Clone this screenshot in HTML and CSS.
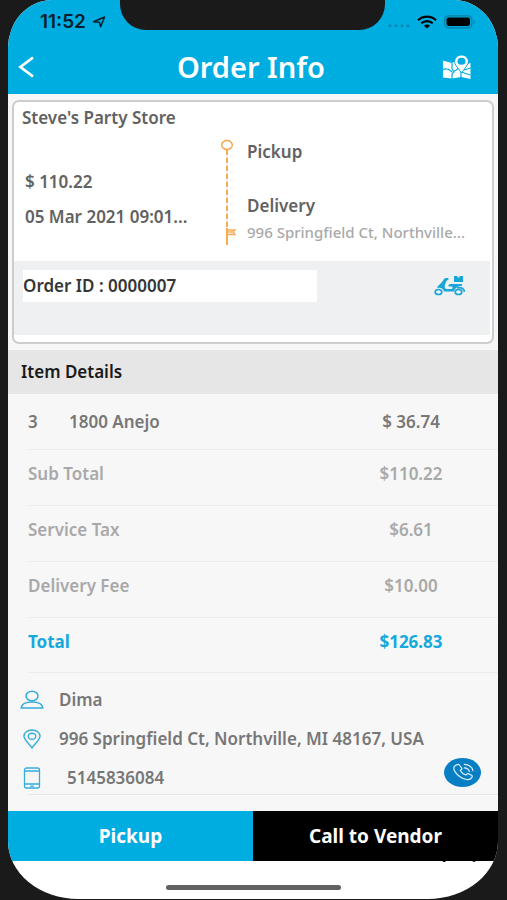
FILE: index.html
```html
<!DOCTYPE html>
<html lang="en">
<head>
<meta charset="utf-8">
<meta name="viewport" content="width=device-width, initial-scale=1">
<title>Order Info</title>
<link rel="stylesheet" href="styles.css">
</head>
<body>
<div class="screen">
  <div class="notch"></div>
  <header class="top">
    <div class="status">
      <span class="clock">11:52
        <svg width="14" height="12" viewBox="0 0 14 12" aria-hidden="true"><path d="M1.5 5.7 12.6 1 8.6 10.8 7.4 6.2Z" fill="none" stroke="#06202b" stroke-width="1.5" stroke-linejoin="round"/></svg>
      </span>
      <span class="signals">
        <svg width="22" height="4" viewBox="0 0 22 4" aria-hidden="true"><g fill="#0880a8"><circle cx="2" cy="3" r="1.4"/><circle cx="8" cy="3" r="1.4"/><circle cx="14" cy="3" r="1.4"/><circle cx="20" cy="3" r="1.4"/></g></svg>
        <svg width="20" height="14" viewBox="0 0 20 14" aria-hidden="true"><g fill="none" stroke="#000" stroke-width="2.2"><path d="M1 5.2C6 .5 14 .5 19 5.2"/><path d="M4.3 8.3c3.3-3 8.1-3 11.4 0"/></g><path d="M10 13.4 6.9 10.7c1.7-1.5 4.5-1.5 6.2 0Z"/></svg>
        <svg width="32" height="14" viewBox="0 0 32 14" aria-hidden="true"><rect x=".8" y=".8" width="27" height="12" rx="3.5" fill="none" stroke="#087fa6" stroke-width="1.3"/><rect x="2.5" y="2.5" width="23.5" height="8.6" rx="2"/><path d="M29.6 5c1.6.5 1.6 3.500 0 4Z" fill="#087fa6"/></svg>
      </span>
    </div>
    <div class="titlebar">
      <button class="icon-button" type="button" aria-label="Back"><svg width="18" height="24" viewBox="0 0 18 24"><path d="M15 2.500 2.500 12 15 21.500" fill="none" stroke="#fff" stroke-width="2.800"/></svg></button>
      <h1>Order Info</h1>
      <button class="icon-button" type="button" aria-label="Map"><svg width="30" height="26" viewBox="0 0 30 26">
        <path d="M1 6.500 9.500 9 15 7l5 5 8.500-3V25L19.500 23 10 24.500 1 23.500Z" fill="#fff"/>
        <g fill="none" stroke="#00ade0" stroke-width="1.200"><path d="M1 15.500c4-1.500 6-.5 9 2.500M10 8.500V15l2 3-2 2v5M12 17c2.500 0 3-2 5-3M19 18v6M19 18l9.500 3M22 16l6.500-2"/></g>
        <path d="M19.500 19 14 11.500C10.500 6.500 14 1 19.500 1S28.500 6.500 25 11.500Z" fill="#fff" stroke="#00ade0" stroke-width="1"/><ellipse cx="19.500" cy="7.300" rx="4" ry="3.500" fill="#00ade0"/>
      </svg></button>
    </div>
  </header>

  <main>
    <section class="card">
      <h2>Steve's Party Store</h2>
      <div class="summary">
        <div class="amounts">
          <p>$ 110.22</p>
          <p>05 Mar 2021 09:01...</p>
        </div>
        <svg class="route" width="18" height="108" viewBox="0 0 18 108" aria-hidden="true"><g fill="none" stroke="#f7ac54"><ellipse cx="8" cy="8" rx="5.300" ry="4.500" stroke-width="1.500"/><path d="M8 12.500V91" stroke-width="2" stroke-dasharray="5.500 2.500"/><path d="M8 91v17" stroke-width="2"/><path d="M8 93h8l-2 2 2 2.500H8M9 95h5" stroke-width="1.300"/></g></svg>
        <div class="stops">
          <h3>Pickup</h3>
          <h3>Delivery</h3>
          <p>996 Springfield Ct, Northville...</p>
        </div>
      </div>
      <div class="order">
        <strong>Order ID : 0000007</strong>
        <svg width="32" height="20" viewBox="0 0 32 20" aria-hidden="true"><g fill="#18a5d8"><path d="M10 3c1-1 3-1 4.500-.8V3.500C12.500 4 12 6 11 8.500c-.8 3 0 4.500 2 4.500h4.500c1 0 1.500-1.500.5-2.500h-3C13.500 9.500 15 8 17 8h11v1.800c-4.500.2-7 2.500-8 5.700H10C9.500 12.500 6 11 3 12.200 3.800 9 7.500 8 10 3Z"/><path d="M20 0h3.500v1.500h2V0H29v6h-9Z"/></g><g fill="none" stroke="#18a5d8" stroke-width="1.700"><ellipse cx="4.500" cy="16" rx="3.300" ry="2.500"/><ellipse cx="24.500" cy="16" rx="3.300" ry="2.500"/><path d="M23 11.800c4-.5 7 1 7.500 4"/></g></svg>
      </div>
    </section>

    <h2 class="section-title">Item Details</h2>
    <table>
      <tbody>
        <tr class="item"><td class="qty">3</td><td>1800 Anejo</td><td class="price">$ 36.74</td></tr>
        <tr><th colspan="2" scope="row">Sub Total</th><td class="price">$110.22</td></tr>
        <tr><th colspan="2" scope="row">Service Tax</th><td class="price">$6.61</td></tr>
        <tr><th colspan="2" scope="row">Delivery Fee</th><td class="price">$10.00</td></tr>
        <tr class="total"><th colspan="2" scope="row">Total</th><td class="price">$126.83</td></tr>
      </tbody>
    </table>

    <section class="contact">
      <p><svg width="24" height="20" viewBox="0 0 24 20" aria-hidden="true"><g fill="none" stroke="#35addb" stroke-width="1.500"><ellipse cx="12" cy="6" rx="6" ry="4.700"/><path d="M1.200 18C1.500 14 5 12 12 12s10.500 2 10.800 6Z"/></g></svg><span>Dima</span></p>
      <p><svg width="24" height="20" viewBox="0 0 24 20" aria-hidden="true"><g fill="none" stroke="#35addb" stroke-width="1.400"><path d="M12 19C10 15.500 4 11 4 7.300 4 3.500 7.500 1 12 1s8 2.500 8 6.300C20 11 14 15.500 12 19Z"/><ellipse cx="12" cy="7.300" rx="3.800" ry="3.100"/></g></svg><span>996 Springfield Ct, Northville, MI 48167, USA</span></p>
      <p class="phone"><svg width="24" height="22" viewBox="0 0 24 22" aria-hidden="true"><g fill="none" stroke="#35addb" stroke-width="1.300"><rect x="4.500" y="1" width="15" height="20" rx="2"/><path d="M4.500 4h15M4.500 17h15M10 19.200h4"/></g></svg><span>5145836084</span></p>
      <button class="call" type="button" aria-label="Call customer"><svg width="22" height="18" viewBox="0 0 24 20"><g fill="none" stroke="#dff2ff" stroke-width="1.300" stroke-linecap="round" stroke-linejoin="round"><path d="M5 2 2.500 3.700C.5 6 3 11 7.500 14.500S18 19.500 20.500 17.500L22 15.800c.7-.8.3-1.500-.5-2.100l-2.800-1.600c-1-.5-1.700-.4-2.300.2l-1.200 1c-2.500-.8-5.200-3-6.200-5l1.200-1c.7-.6.7-1.300.2-2L8.200 2.500C7.200 1.200 6.200 1.200 5 2Z"/><path d="M13.500 5.500c3 .2 5 1.700 5.500 4M13.500 1.500c5 .2 9 3.200 9.500 7"/></g></svg></button>
    </section>
  </main>

  <div class="actions">
    <button class="pickup" type="button">Pickup</button>
    <button class="vendor" type="button">Call to Vendor</button>
  </div>
  <footer>
    <svg width="34" height="2" viewBox="0 0 34 2" aria-hidden="true"><path d="M0 0h4L3 1H2ZM30 0h4l-2 1Z"/></svg>
    <span class="home"></span>
  </footer>
</div>
</body>
</html>
```
FILE: styles.css
```css
* { box-sizing: border-box; }
body {
  margin: 0;
  padding: 0 9px 1px 8px;
  background: #1a1a1a;
  font-family: "Noto Sans", "Open Sans", sans-serif;
  font-size: 17px;
  font-weight: 600;
  line-height: 24px;
  color: #626262;
}
h1, h2, h3, p { margin: 0; font-size: 17px; font-weight: 600; }
button { border: 0; padding: 0; font: inherit; color: #fff; background: none; }
svg { display: block; flex: none; }
.screen {
  position: relative;
  overflow: hidden;
  background: #fff;
  border-radius: 44px 44px 70px 70px / 48px 48px 58px 58px;
}
.notch {
  position: absolute;
  top: 0;
  left: 112px;
  right: 113px;
  height: 30px;
  background: #1a1a1a;
  border-radius: 0 0 26px 26px;
}
.top { height: 94px; background: #00ade0; }
.status {
  display: flex;
  justify-content: space-between;
  align-items: center;
  height: 44px;
  padding: 0 22px 0 32px;
}
.clock {
  display: flex;
  align-items: center;
  gap: 6px;
  font-family: Inter, sans-serif;
  font-size: 19px;
  color: #06202b;
}
.signals { display: flex; align-items: center; gap: 7px; }
.signals svg:first-child { margin-top: 6px; }
.titlebar {
  display: flex;
  align-items: center;
  justify-content: space-between;
  padding: 0 26px 0 10px;
}
.titlebar h1 { flex: 1; padding-left: 24px; text-align: center; font-size: 29px; line-height: 46px; color: #fff; }
main { background: #f7f7f7; padding-top: 6px; }
.card {
  margin: 0 4px 6px;
  border: 2px solid #cccece;
  border-radius: 7px;
  background: #fff;
  padding-bottom: 7px;
}
.card h2 { padding: 4px 8px 0; }
.summary { display: flex; height: 131px; padding-top: 7px; }
.amounts { width: 205px; padding: 33px 0 0 11px; }
.amounts p { margin-bottom: 11px; }
.route { margin-right: 10px; }
.stops { flex: 1; min-width: 0; padding-top: 3px; }
.stops h3 { margin-bottom: 30px; }
.stops h3 + h3 { margin-bottom: 2px; }
.stops p { font-size: 15px; font-weight: 500; color: #a9a9a9; white-space: nowrap; }
.order {
  display: flex;
  justify-content: space-between;
  align-items: flex-start;
  height: 74px;
  margin-right: 2px;
  padding: 9px 24px 0 9px;
  background: #eef0f2;
}
.order strong { width: 294px; line-height: 32px; font-weight: 600; color: #363636; background: #fff; }
.order svg { margin-top: 6px; }
.section-title { padding: 0 13px; line-height: 44px; color: #191919; background: #e6e6e6; }
table { width: calc(100% - 20px); margin-left: 20px; border-collapse: collapse; }
tr { height: 56px; border-bottom: 1px solid #ececee; }
tr.item, tr.total { height: 55px; }
td, th { padding: 0 0 6px; text-align: left; font-weight: 600; color: #a9a9a9; }
.item td { padding: 1px 0 0; color: #777; }
.qty { width: 41px; }
td.price { width: 174px; text-align: center; }
.total th, .total td { font-weight: 700; color: #16a9dc; }
.contact { position: relative; padding: 8px 0 16px 12px; }
.contact p { display: flex; align-items: center; gap: 15px; height: 39px; color: #777; }
.contact .phone { gap: 23px; height: 38px; }
.contact::after { content: ""; display: block; margin: -3px 0 0 8px; border-bottom: 1px solid #e2e7e7; }
.call {
  position: absolute;
  right: 17px;
  bottom: 24px;
  display: grid;
  place-items: center;
  width: 37px;
  height: 29px;
  border-radius: 50%;
  background: #087fc5;
}
.actions { display: grid; grid-template-columns: 1fr 1fr; }
.actions button { height: 50px; font-size: 19px; font-weight: 700; }
.pickup { background: #00ade0; }
.vendor { background: #000; }
footer { height: 38px; }
footer svg { margin: 0 22px 0 auto; }
.home { display: block; width: 175px; height: 5px; margin: 22px auto 0; border-radius: 3px; background: #626262; }
```
